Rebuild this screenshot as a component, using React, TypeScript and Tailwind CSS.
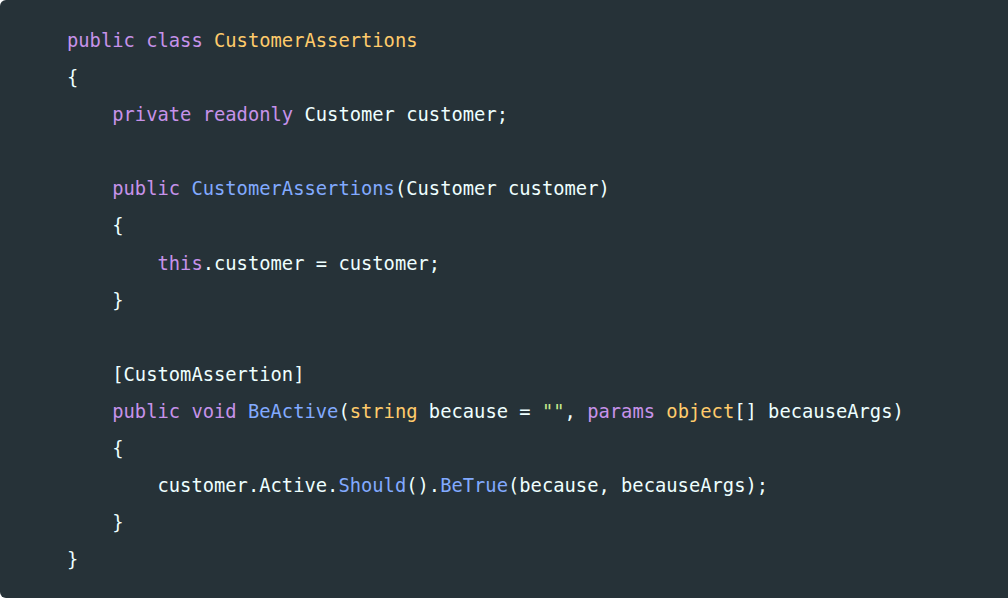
import React from "react";

type Tok = [string, string];

const K = "text-[#c792ea]"; // keywords
const T = "text-[#ffcb6b]"; // types
const F = "text-[#82aaff]"; // functions
const S = "text-[#c3e88d]"; // strings
const P = "text-[#eeffff]"; // plain

const lines: Tok[][] = [
  [[K, "public class "], [T, "CustomerAssertions"]],
  [[P, "{"]],
  [[P, "    "], [K, "private readonly "], [P, "Customer customer;"]],
  [],
  [[P, "    "], [K, "public "], [F, "CustomerAssertions"], [P, "(Customer customer)"]],
  [[P, "    {"]],
  [[P, "        "], [K, "this"], [P, ".customer = customer;"]],
  [[P, "    }"]],
  [],
  [[P, "    [CustomAssertion]"]],
  [
    [P, "    "],
    [K, "public void "],
    [F, "BeActive"],
    [P, "("],
    [T, "string"],
    [P, " because = "],
    [S, "\"\""],
    [P, ", "],
    [K, "params "],
    [T, "object"],
    [P, "[] becauseArgs)"],
  ],
  [[P, "    {"]],
  [
    [P, "        customer.Active."],
    [F, "Should"],
    [P, "()."],
    [F, "BeTrue"],
    [P, "(because, becauseArgs);"],
  ],
  [[P, "    }"]],
  [[P, "}"]],
];

export default function App() {
  return (
    <div className="bg-white h-[598px] w-[1008px]">
      <div className="h-full bg-[#263238] rounded-l-md pl-[67px] pt-[22px] overflow-hidden">
        <pre className="font-['DejaVu_Sans_Mono',monospace] text-[18.8px] leading-[37.1px] text-[#eeffff] whitespace-pre">
          {lines.map((line, i) => (
            <div key={i} className="h-[37.1px]">
              {line.map(([cls, txt], j) => (
                <span key={j} className={cls}>
                  {txt}
                </span>
              ))}
            </div>
          ))}
        </pre>
      </div>
    </div>
  );
}
